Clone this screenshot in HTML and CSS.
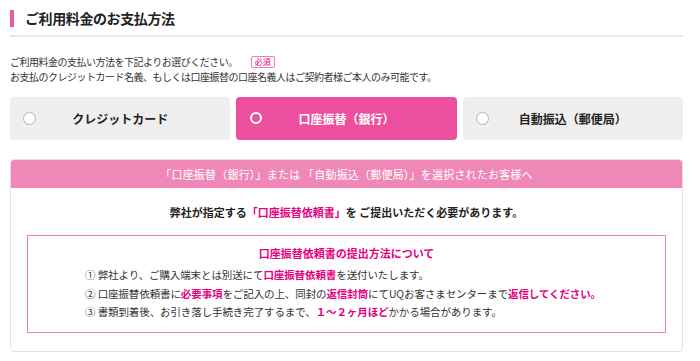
FILE: index.html
```html
<!DOCTYPE html>
<html lang="ja">
<head>
    <meta charset="UTF-8">
    <title>ご利用料金のお支払方法</title>
    <link rel="stylesheet" href="styles.css">
</head>
<body>
    <div id="payment">
        <div class="section-head">
            <h1>ご利用料金のお支払方法</h1>
        </div>

        <div class="intro">
            <p>ご利用料金の支払い方法を下記よりお選びください。<span class="required">必須</span></p>
            <p>お支払のクレジットカード名義、もしくは口座振替の口座名義人はご契約者様ご本人のみ可能です。</p>
        </div>

        <div class="methods">
            <label class="method">
                <span class="radio"></span>
                <span class="method-name">クレジットカード</span>
            </label>
            <label class="method active">
                <span class="radio"></span>
                <span class="method-name">口座振替（銀行）</span>
            </label>
            <label class="method">
                <span class="radio"></span>
                <span class="method-name">自動振込（郵便局）</span>
            </label>
        </div>

        <div class="notice">
            <div class="notice-head">「口座振替（銀行）」または 「自動振込（郵便局）」を選択されたお客様へ</div>
            <div class="notice-body">
                <p class="notice-lead">弊社が指定する<em>「口座振替依頼書」</em>を ご提出いただく必要があります。</p>

                <div class="howto">
                    <h2>口座振替依頼書の提出方法について</h2>
                    <ol>
                        <li>① 弊社より、ご購入端末とは別送にて<em>口座振替依頼書</em>を送付いたします。</li>
                        <li>② 口座振替依頼書に<em>必要事項</em>をご記入の上、同封の<em>返信封筒</em>にてUQお客さまセンターまで<em>返信してください。</em></li>
                        <li>③ 書類到着後、お引き落し手続き完了するまで、<em>１〜２ヶ月ほど</em>かかる場合があります。</li>
                    </ol>
                </div>
            </div>
        </div>
    </div>
</body>
</html>
```

FILE: styles.css
```css
body {
    margin: 0;
    font-family: "Noto Sans CJK JP", "Liberation Sans", sans-serif;
    color: #333;
    background-color: #fff;
}

#payment {
    width: 673px;
    margin-left: 10px;
    padding-top: 10px;
}

.section-head {
    border-bottom: 2px solid #e8e8e8;
    padding-bottom: 8px;
}

h1 {
    margin: 0;
    border-left: 4px solid #ed5aa4;
    padding-left: 11px;
    font-size: 14px;
    line-height: 17px;
    letter-spacing: -0.4px;
    color: #222;
}

.intro {
    margin-top: 17px;
}

.intro p {
    margin: 0;
    font-size: 10px;
    line-height: 15px;
    letter-spacing: -0.5px;
}

.required {
    display: inline-block;
    margin-left: 13px;
    padding: 0 3px;
    border: 1px solid #ef7cbc;
    border-radius: 2px;
    font-size: 8px;
    line-height: 10px;
    letter-spacing: 0;
    color: #e4007f;
    vertical-align: 1px;
}

.methods {
    display: flex;
    gap: 6px;
    margin-top: 13px;
}

.method {
    flex: 1;
    position: relative;
    height: 43px;
    display: flex;
    align-items: center;
    justify-content: center;
    background-color: #efefef;
    border-radius: 4px;
    font-size: 12px;
    font-weight: bold;
    color: #222;
}

.method.active {
    background-color: #eb4f9e;
    color: #fff;
}

.radio {
    position: absolute;
    left: 13px;
    top: 15px;
    width: 11px;
    height: 11px;
    border: 1.5px solid #b5b5b5;
    border-radius: 50%;
    background-color: #fff;
}

.method.active .radio {
    left: 14px;
    border: 2.5px solid #fff;
    width: 8px;
    height: 8px;
    background-color: transparent;
}

.notice {
    margin-top: 19px;
    border: 1px solid #e2e2e2;
    border-radius: 4px;
    overflow: hidden;
}

.notice-head {
    background-color: #ef88b6;
    color: #fff;
    text-align: center;
    font-size: 11px;
    line-height: 28px;
    letter-spacing: 0.2px;
}

.notice-body {
    padding: 16px 16px 18px;
}

.notice-lead {
    margin: 0;
    text-align: center;
    font-size: 11px;
    font-weight: bold;
    line-height: 16px;
    color: #222;
}

em {
    font-style: normal;
    color: #e4007f;
}

.howto {
    margin-top: 15px;
    border: 1px solid #f07cbe;
    padding: 9px 0 10px 57px;
}

h2 {
    margin: 0 0 5px -57px;
    text-align: center;
    font-size: 11px;
    line-height: 16px;
    color: #e4007f;
}

ol {
    margin: 0;
    padding: 0;
    list-style: none;
}

li {
    font-size: 10.5px;
    line-height: 18.5px;
    letter-spacing: -0.1px;
}

li em {
    font-weight: bold;
}
```
